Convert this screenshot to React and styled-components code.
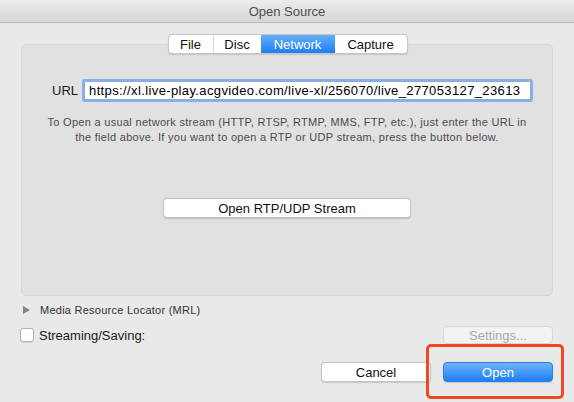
import React from "react";
import styled, { createGlobalStyle } from "styled-components";

const Global = createGlobalStyle`
  html, body { margin: 0; padding: 0; background: #e9e9e9; }
  body { font-family: "Liberation Sans", Arial, sans-serif; }
  * { box-sizing: border-box; }
`;

const Window = styled.div`
  position: relative;
  width: 574px;
  height: 402px;
  overflow: hidden;
  background: #e9e9e9;
  display: flex;
  flex-direction: column;
  font-family: "Liberation Sans", Arial, sans-serif;
  color: #1a1a1a;
`;

const TitleBar = styled.div`
  height: 23px;
  flex: none;
  display: flex;
  align-items: center;
  justify-content: center;
  background: linear-gradient(#ececec, #d6d6d6);
  border-bottom: 1px solid #b9b9b9;
  font-size: 13px;
  color: #4d4d4d;
  padding-top: 1px;
`;

const Body = styled.div`
  display: flex;
  flex-direction: column;
  padding: 11px 21px 0 21px;
`;

const Segmented = styled.div`
  position: relative;
  z-index: 1;
  align-self: center;
  display: flex;
  height: 20px;
  margin-bottom: -10px;
  margin-left: 1px;
  background: #fff;
  border: 1px solid #c6c6c6;
  border-radius: 4px;
  box-shadow: 0 0.5px 1px rgba(0, 0, 0, 0.12);
  overflow: hidden;
`;

const Tab = styled.div`
  width: ${(p) => p.$w}px;
  display: flex;
  align-items: center;
  justify-content: center;
  font-size: 13px;
  color: ${(p) => (p.$active ? "#fff" : "#111")};
  background: ${(p) =>
    p.$active ? "linear-gradient(#67aefb, #1b7ff6)" : "transparent"};
  border-left: ${(p) => (p.$divider ? "1px solid #dadada" : "none")};
`;

const Panel = styled.div`
  height: 252px;
  background: #e1e1e1;
  border: 1px solid #d6d6d6;
  border-radius: 5px;
  padding-top: 34px;
  display: flex;
  flex-direction: column;
  align-items: center;
`;

const UrlRow = styled.div`
  align-self: stretch;
  display: flex;
  align-items: center;
  height: 23px;
  padding-left: 30px;
  gap: 6px;
`;

const Label = styled.span`
  font-size: 13px;
  color: #1a1a1a;
`;

const UrlInput = styled.input`
  width: 447px;
  height: 19px;
  border: 1px solid #8fa9cf;
  border-radius: 1px;
  box-shadow: 0 0 0 2px #85b1f1;
  background: #fff;
  padding: 0 0 0 4px;
  font-family: "Liberation Sans", Arial, sans-serif;
  font-size: 13px;
  letter-spacing: 0.38px;
  color: #000;
  outline: none;
`;

const Help = styled.p`
  margin: 13px 0 0 0;
  font-size: 11px;
  line-height: 15px;
  letter-spacing: 0.3px;
  color: #4a4a4a;
  text-align: center;
`;

const PushButton = styled.button`
  width: ${(p) => p.$w}px;
  height: ${(p) => p.$h || 20}px;
  margin-top: ${(p) => p.$mt || 0}px;
  font-family: "Liberation Sans", Arial, sans-serif;
  font-size: 13px;
  padding: 0;
  border-radius: 4px;
  color: ${(p) =>
    p.$primary ? "#fff" : p.$disabled ? "#a9a9a9" : "#111"};
  background: ${(p) =>
    p.$primary
      ? "linear-gradient(#6db4fb, #1d7ff5)"
      : p.$disabled
      ? "#f3f3f3"
      : "#fff"};
  border: 1px solid
    ${(p) => (p.$primary ? "#2a7ee8" : p.$disabled ? "#d8d8d8" : "#c4c4c4")};
  box-shadow: ${(p) =>
    p.$disabled ? "none" : "0 0.5px 1px rgba(0,0,0,0.15)"};
`;

const MrlRow = styled.div`
  display: flex;
  align-items: center;
  height: 14px;
  margin-top: 7px;
  padding-left: 2px;
  gap: 10px;
  font-size: 11px;
  letter-spacing: 0.25px;
  color: #333;
`;

const Triangle = styled.span`
  width: 0;
  height: 0;
  border-top: 4px solid transparent;
  border-bottom: 4px solid transparent;
  border-left: 7px solid #858585;
`;

const StreamRow = styled.div`
  display: flex;
  align-items: center;
  justify-content: space-between;
  height: 18px;
  margin-top: 9px;
  margin-left: -1px;
`;

const CheckLabel = styled.label`
  display: flex;
  align-items: center;
  gap: 5px;
  font-size: 13px;
  color: #1a1a1a;
`;

const Check = styled.span`
  width: 14px;
  height: 14px;
  background: #fff;
  border: 1px solid #b2b2b2;
  border-radius: 3px;
  box-shadow: 0 0.5px 1px rgba(0, 0, 0, 0.08);
`;

const ButtonRow = styled.div`
  display: flex;
  justify-content: flex-end;
  gap: 12px;
  margin-top: 18px;
`;

const Highlight = styled.div`
  position: absolute;
  left: 426px;
  top: 344px;
  width: 138px;
  height: 55px;
  border: 3px solid #f2481f;
  border-radius: 5px;
  pointer-events: none;
`;

export default function App() {
  const tabs = [
    { label: "File", w: 44 },
    { label: "Disc", w: 48 },
    { label: "Network", w: 74, active: true },
    { label: "Capture", w: 72 },
  ];
  return (
    <>
      <Global />
      <Window>
        <TitleBar>Open Source</TitleBar>
        <Body>
          <Segmented>
            {tabs.map((t, i) => (
              <Tab
                key={t.label}
                $w={t.w}
                $active={t.active}
                $divider={i > 0 && !t.active && !tabs[i - 1].active}
              >
                {t.label}
              </Tab>
            ))}
          </Segmented>
          <Panel>
            <UrlRow>
              <Label>URL</Label>
              <UrlInput
                readOnly
                value="https://xl.live-play.acgvideo.com/live-xl/256070/live_277053127_23613"
              />
            </UrlRow>
            <Help>
              To Open a usual network stream (HTTP, RTSP, RTMP, MMS, FTP, etc.), just enter the URL in
              <br />
              the field above. If you want to open a RTP or UDP stream, press the button below.
            </Help>
            <PushButton $w={248} $mt={53}>
              Open RTP/UDP Stream
            </PushButton>
          </Panel>
          <MrlRow>
            <Triangle />
            Media Resource Locator (MRL)
          </MrlRow>
          <StreamRow>
            <CheckLabel>
              <Check />
              Streaming/Saving:
            </CheckLabel>
            <PushButton $w={110} $h={18} $disabled>
              Settings...
            </PushButton>
          </StreamRow>
          <ButtonRow>
            <PushButton $w={110}>Cancel</PushButton>
            <PushButton $w={110} $primary>
              Open
            </PushButton>
          </ButtonRow>
        </Body>
        <Highlight />
      </Window>
    </>
  );
}
